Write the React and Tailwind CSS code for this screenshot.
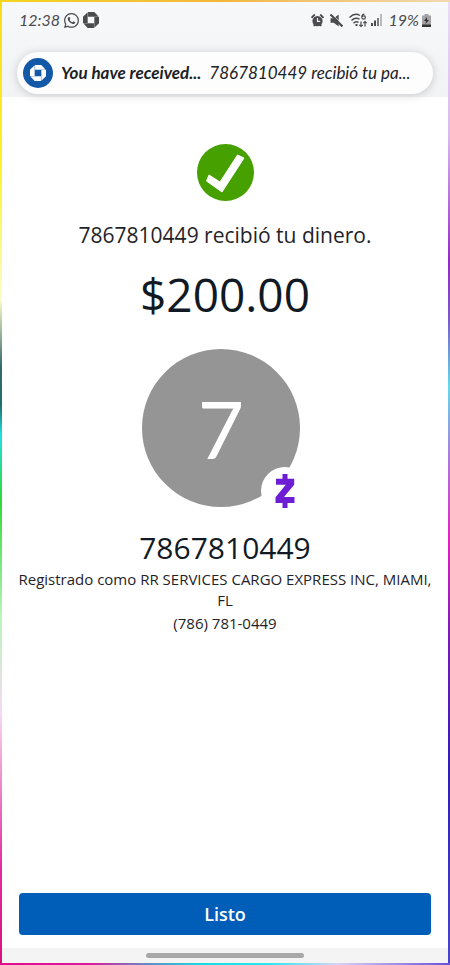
import { BsWhatsapp } from "react-icons/bs"

const OctagonLogo = ({ className }) => (
  <svg viewBox="0 0 24 24" fill="currentColor" className={className} aria-hidden="true">
    <path d="M7.600 0v7h16L17 0H7.600Z" />
    <path d="M24 7.600h-7v16L24 17V7.600Z" />
    <path d="M16.400 24v-7H.4L7 24h9.400Z" />
    <path d="M0 16.400h7V.4L0 7v9.400Z" />
  </svg>
)

const AlarmIcon = () => (
  <svg viewBox="0 0 24 24" className="size-[13px]" aria-hidden="true">
    <path d="M1 7 7 1M17 1l6 6M5 22l3-3M19 22l-3-3" stroke="currentColor" strokeWidth="3.500" />
    <circle cx="12" cy="13" r="9.500" fill="currentColor" />
    <path d="M12 7.500v6h5" fill="none" stroke="#f3f4f6" strokeWidth="2.200" />
  </svg>
)

const MuteIcon = () => (
  <svg viewBox="0 0 24 24" className="size-[13px]" aria-hidden="true">
    <path d="M1 8h6l9-7v22l-9-7H1Z" fill="currentColor" />
    <path d="m5 1 20 20" stroke="#f3f4f6" strokeWidth="1.500" />
    <path d="m1 1 22 22" stroke="currentColor" strokeWidth="4" />
  </svg>
)

const WifiIcon = () => (
  <svg viewBox="0 0 20 15" className="h-[15px] w-5" fill="none" stroke="currentColor" aria-hidden="true">
    <path d="M.5 4.500C4 1 8 .8 11 2.500M2.500 7.500C5 5 8 4.800 10.500 6.200M4.500 10.200C6 8.600 8 8.500 9.500 9.300" strokeWidth="1.400" />
    <path d="M6.500 12h2" strokeWidth="2" />
    <path d="M15.500 1C13.500 1 12.800 2.500 12.800 4.200c0 2.600 3.600 2.300 3.600.2 0-1.900-2.600-2-3.500-.4" strokeWidth="1.200" />
    <path d="M12 8.500v5M10.300 11.800l1.700 1.700 1.700-1.700M16 13.500v-5M14.300 10.200 16 8.500l1.700 1.700" strokeWidth="1.200" />
  </svg>
)

const SignalIcon = () => (
  <svg viewBox="0 0 12 12" className="size-3" fill="currentColor" aria-hidden="true">
    <path d="M0 9h2v3H0ZM3 6.500h2V12H3Z" />
    <path d="M6 4h2v8H6Z" opacity=".7" />
    <path d="M9 0h2v12H9Z" opacity=".35" />
  </svg>
)

const BatteryIcon = () => (
  <svg viewBox="0 0 9 13" className="h-[13px] w-[9px]" aria-hidden="true">
    <path d="M2.500 0h4v1.500H9V13H0V1.500h2.500Z" fill="#a3a3a6" />
    <path d="M0 10.500h9V13H0Z" fill="#333" />
    <path d="M5 3 2 7h2l-.5 3L7 6H5Z" fill="#333" />
  </svg>
)

const StatusBar = () => (
  <div className="flex items-center justify-between px-[17px] pt-[6px] text-[#4b4b4f]">
    <div className="flex items-center gap-1">
      <time className="font-['Lato',sans-serif] text-base leading-6 italic">12:38</time>
      <BsWhatsapp className="size-[15px]" />
      <OctagonLogo className="size-4" />
    </div>
    <div className="flex items-center gap-[6px]">
      <AlarmIcon />
      <MuteIcon />
      <div className="flex items-center gap-[2px]">
        <WifiIcon />
        <SignalIcon />
      </div>
      <div className="flex items-center gap-[3px]">
        <span className="font-['Lato',sans-serif] text-base leading-6 italic">19%</span>
        <BatteryIcon />
      </div>
    </div>
  </div>
)

const NotificationPill = () => (
  <div className="mx-[15px] mt-5 flex h-[42px] items-center gap-2 rounded-full bg-[#fdfdfe] pr-4 pl-[6px] whitespace-nowrap shadow-[0_1px_10px_rgba(0,0,0,0.18)]">
    <div className="flex size-[30px] shrink-0 items-center justify-center rounded-full bg-[#1459a8] text-white">
      <OctagonLogo className="size-4" />
    </div>
    <p className="truncate font-['Lato',sans-serif] text-[17px] text-[#202124] italic">
      <strong className="mr-2 font-bold">You have received...</strong>
      7867810449 recibió tu pa...
    </p>
  </div>
)

const CheckBadge = () => (
  <svg viewBox="0 0 57 57" className="size-[57px]" aria-hidden="true">
    <circle cx="28.500" cy="28.500" r="28.500" fill="#46a000" />
    <path
      d="M12 31 9.500 37 25 48 47 14 40.500 11 23 38Z"
      fill="#fff"
      stroke="#fff"
      strokeWidth="1"
      strokeLinejoin="round"
    />
  </svg>
)

const ZelleMark = () => (
  <svg viewBox="0 0 20 34" className="h-[34px] w-5" fill="#6d1ed4" aria-hidden="true">
    <path d="M7.500 0h5v4.800h6.700v6L9 23h10.500v6h-7v5h-5v-5H.5v-5.800L10.800 10.800H1v-6h6.500Z" />
  </svg>
)

const Avatar = () => (
  <div className="relative mt-[25px] pr-2">
    <div className="flex size-[158px] items-center justify-center rounded-full bg-[#959595] font-['Lato',sans-serif] text-[80px] leading-none text-white">
      7
    </div>
    <div className="absolute -right-px -bottom-2 flex size-12 items-center justify-center rounded-full bg-white">
      <ZelleMark />
    </div>
  </div>
)

const App = () => {
  return (
    <div className="flex min-h-screen flex-col bg-white font-['Open_Sans',sans-serif] text-[#1f2328]">
      <div className="h-[2px] bg-linear-to-r from-[#f5d51c] via-[#f4b63c] to-[#f0d9b0]" />
      <div className="flex flex-1">
        <div className="w-[2px] bg-[linear-gradient(to_bottom,#f8dc18_0%,#fbf32a_17%,#fdfdc8_31%,#35686c_38%,#1f6f70_42%,#20dfe0_45%,#30d935_52%,#b9f5bb_64%,#f6d9f2_74%,#e22c9c_90%,#d9107c_100%)]" />
        <div className="flex min-w-0 flex-1 flex-col">
          <header className="h-[95px] bg-linear-to-b from-[#f7f8fa] to-[#f2f3f5]">
            <StatusBar />
            <NotificationPill />
          </header>

          <main className="flex flex-1 flex-col items-center px-2 pt-[47px] text-center">
            <CheckBadge />
            <p className="mt-5 text-[21px] leading-7">7867810449 recibió tu dinero.</p>
            <p className="mt-[15px] text-[46px] leading-[60px] text-[#111a24]">$200.00</p>
            <Avatar />
            <h1 className="mt-[21px] text-[30px] leading-10 text-[#111a24]">7867810449</h1>
            <p className="mt-px text-[15px] leading-[21px]">Registrado como RR SERVICES CARGO EXPRESS INC, MIAMI, FL</p>
            <p className="text-[15px] leading-6">(786) 781-0449</p>
          </main>

          <div className="px-[17px] pb-[13px]">
            <button type="button" className="h-[42px] w-full rounded-[4px] bg-[#005eb8] text-lg font-semibold text-white">
              Listo
            </button>
          </div>

          <div className="flex h-[15px] items-center justify-center bg-[#f4f4f5]">
            <div className="h-[5px] w-[158px] rounded-full bg-[#a8a8a8]" />
          </div>
        </div>
        <div className="w-[2px] bg-[linear-gradient(to_bottom,#e9dcf3_0%,#d9b8f0_14%,#9327c8_27%,#7a58cc_33%,#62dbe8_40%,#a77ee0_47%,#e51fc0_56%,#7719b8_66%,#2e1cb8_80%,#4a43cf_100%)]" />
      </div>
      <div className="h-[2px] bg-[linear-gradient(to_right,#e20b8c_0%,#d91a9c_20%,#6b86c4_32%,#15dbe5_45%,#2be8f2_60%,#d9d2f5_75%,#6a4fd8_100%)]" />
    </div>
  )
}

export default App
